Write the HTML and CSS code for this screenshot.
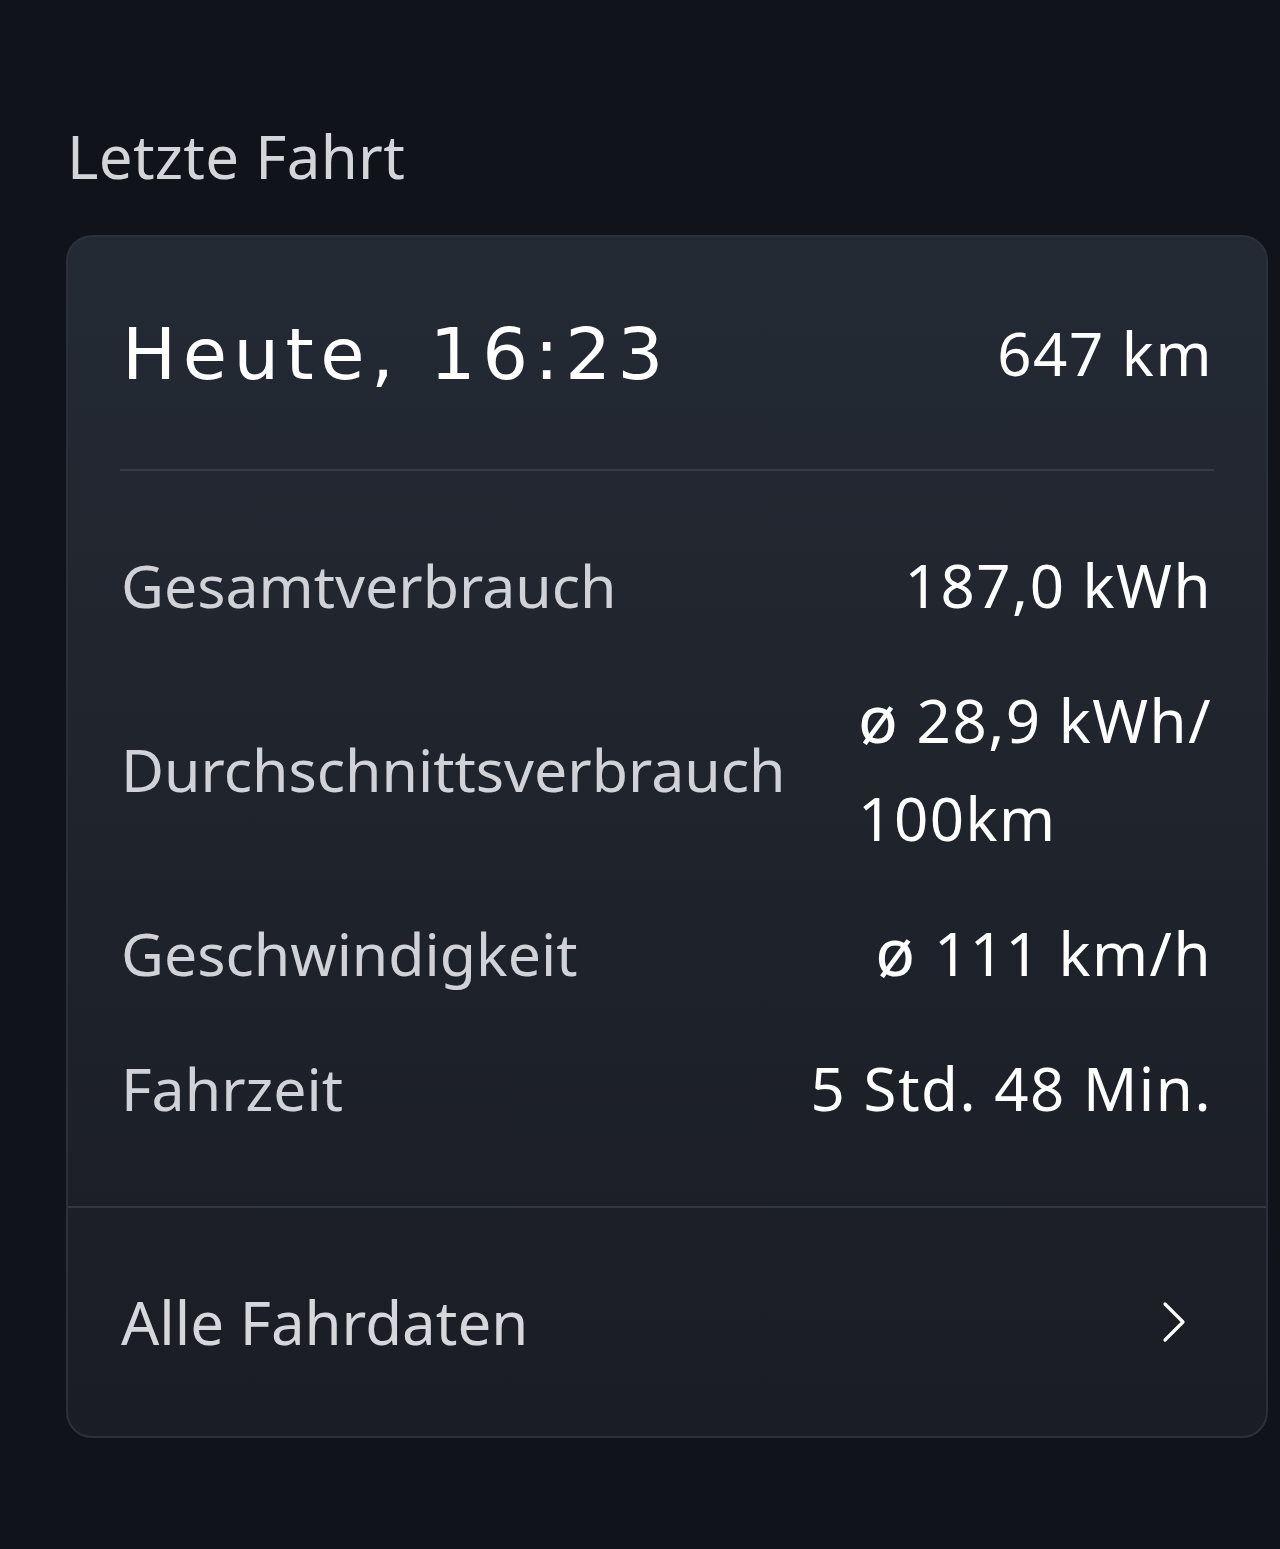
FILE: index.html
```html
<!DOCTYPE html>
<html lang="de">
<head>
  <meta charset="UTF-8">
  <meta name="viewport" content="width=device-width, initial-scale=1.0">
  <title>Letzte Fahrt</title>
  <link rel="stylesheet" href="styles.css">
</head>
<body>
  <div class="page">
    <h2 class="section-title">Letzte Fahrt</h2>

    <div class="card">
      <div class="card-head">
        <span class="trip-date">Heute, 16:23</span>
        <span class="trip-distance">647 km</span>
      </div>

      <div class="stats">
        <div class="stat">
          <span class="label">Gesamtverbrauch</span>
          <span class="value">187,0 kWh</span>
        </div>
        <div class="stat">
          <span class="label">Durchschnittsverbrauch</span>
          <span class="value"><span class="avg">ø</span> 28,9 kWh/<br>100km</span>
        </div>
        <div class="stat">
          <span class="label">Geschwindigkeit</span>
          <span class="value"><span class="avg">ø</span> 111 km/h</span>
        </div>
        <div class="stat">
          <span class="label">Fahrzeit</span>
          <span class="value">5 Std. 48 Min.</span>
        </div>
      </div>

      <a class="card-link" href="#">
        <span>Alle Fahrdaten</span>
        <svg class="chevron" width="30" height="44" viewBox="0 0 30 44">
          <path d="M6 4 L24 22 L6 40" fill="none" stroke="#fff" stroke-width="3.2" stroke-linecap="round" stroke-linejoin="round"/>
        </svg>
      </a>
    </div>
  </div>
</body>
</html>
```

FILE: styles.css
```css
body {
  margin: 0;
  background: #10131a;
  font-family: "Noto Sans", "Open Sans", sans-serif;
  color: #fff;
  min-height: 100vh;
}
.page {
  padding: 100px 12px 0 66px;
}
.section-title {
  margin: 0 0 23px 1px;
  font-size: 60px;
  font-weight: 400;
  line-height: 112px;
  letter-spacing: 0.3px;
  color: #d4d5d9;
}
.card {
  border: 2px solid #2b303a;
  border-radius: 26px;
  background: linear-gradient(180deg, #242a34 0%, #1f232c 50%, #1a1d24 100%);
  overflow: hidden;
}
.card-head {
  margin: 0 52px;
  height: 232px;
  display: flex;
  align-items: center;
  justify-content: space-between;
  border-bottom: 2px solid #363b46;
}
.trip-date {
  font-family: "DejaVu Sans", sans-serif;
  font-size: 72px;
  letter-spacing: 6.5px;
  font-weight: 400;
  padding: 2px 0 0 2px;
}
.trip-distance {
  font-size: 60px;
  letter-spacing: 1.5px;
  padding-right: 1px;
}
.stats {
  padding: 65px 54px 69px 53px;
  display: flex;
  flex-direction: column;
  gap: 37px;
  border-bottom: 2px solid #323742;
}
.stat {
  display: flex;
  align-items: center;
  justify-content: space-between;
  gap: 40px;
}
.label {
  font-size: 59px;
  line-height: 98px;
  color: #d0d2d7;
  white-space: nowrap;
}
.value {
  font-size: 60px;
  line-height: 98px;
  letter-spacing: 1.5px;
  color: #fff;
  text-align: left;
}
.avg {
  font-size: 66px;
  line-height: 0;
}
.card-link {
  display: flex;
  align-items: center;
  justify-content: space-between;
  height: 228px;
  padding: 0 77px 0 53px;
  color: #d6d7db;
  text-decoration: none;
  font-size: 60px;
}
.chevron {
  display: block;
}
```
